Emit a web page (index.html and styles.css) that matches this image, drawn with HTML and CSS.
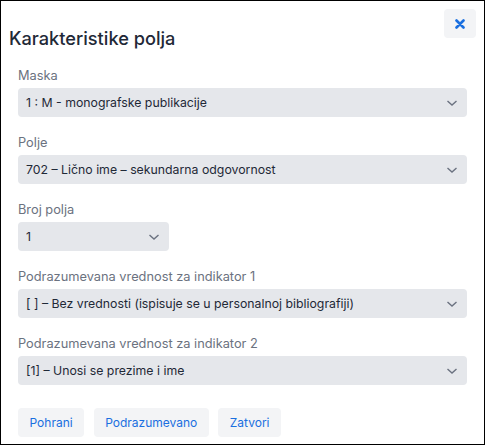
FILE: index.html
```html
<!DOCTYPE html>
<html lang="sr">
<head>
<meta charset="utf-8">
<title>Karakteristike polja</title>
<link rel="stylesheet" href="styles.css">
</head>
<body>
<div class="dialog">
  <div class="header">
    <h1 class="title">Karakteristike polja</h1>
    <button class="close" type="button" aria-label="Zatvori">
      <svg width="10" height="10" viewBox="0 0 10 10"><path d="M1.5 1.5 L8.5 8.5 M8.5 1.5 L1.5 8.5" stroke="#1a6fe0" stroke-width="2.6" stroke-linecap="round" fill="none"/></svg>
    </button>
  </div>
  <div class="form">
    <div class="field">
      <div class="label">Maska</div>
      <div class="select">
        <span class="value">1 : M - monografske publikacije</span>
        <svg class="chev" width="12" height="8" viewBox="0 0 12 8"><path d="M1.5 2 L6 6 L10.5 2" stroke="#6b7280" stroke-width="1.4" fill="none"/></svg>
      </div>
    </div>
    <div class="field">
      <div class="label">Polje</div>
      <div class="select">
        <span class="value">702 – Lično ime – sekundarna odgovornost</span>
        <svg class="chev" width="12" height="8" viewBox="0 0 12 8"><path d="M1.5 2 L6 6 L10.5 2" stroke="#6b7280" stroke-width="1.4" fill="none"/></svg>
      </div>
    </div>
    <div class="field">
      <div class="label">Broj polja</div>
      <div class="select small">
        <span class="value">1</span>
        <svg class="chev" width="12" height="8" viewBox="0 0 12 8"><path d="M1.5 2 L6 6 L10.5 2" stroke="#6b7280" stroke-width="1.4" fill="none"/></svg>
      </div>
    </div>
    <div class="field">
      <div class="label">Podrazumevana vrednost za indikator 1</div>
      <div class="select">
        <span class="value">[ ] – Bez vrednosti (ispisuje se u personalnoj bibliografiji)</span>
        <svg class="chev" width="12" height="8" viewBox="0 0 12 8"><path d="M1.5 2 L6 6 L10.5 2" stroke="#6b7280" stroke-width="1.4" fill="none"/></svg>
      </div>
    </div>
    <div class="field">
      <div class="label">Podrazumevana vrednost za indikator 2</div>
      <div class="select">
        <span class="value">[1] – Unosi se prezime i ime</span>
        <svg class="chev" width="12" height="8" viewBox="0 0 12 8"><path d="M1.5 2 L6 6 L10.5 2" stroke="#6b7280" stroke-width="1.4" fill="none"/></svg>
      </div>
    </div>
    <div class="actions">
      <button class="btn" type="button">Pohrani</button>
      <button class="btn" type="button">Podrazumevano</button>
      <button class="btn" type="button">Zatvori</button>
    </div>
  </div>
</div>
</body>
</html>
```
FILE: styles.css
```css
* { box-sizing: border-box; }
html, body { margin: 0; padding: 0; background: #fff; }
body {
  font-family: "Inter", "Noto Sans", "Liberation Sans", sans-serif;
  color: #1f2937;
}
.dialog {
  width: 485px;
  height: 445px;
  border: 1px solid #000;
  background: #fff;
}
.header {
  display: flex;
  justify-content: space-between;
  align-items: flex-start;
  padding: 8px 8px 0 8px;
}
.title {
  margin: 17px 0 0 0;
  font-size: 18.2px;
  line-height: 24px;
  font-weight: 500;
  color: #1f2937;
}
.close {
  width: 32px;
  height: 29px;
  border: none;
  border-radius: 4px;
  background: #f3f4f6;
  display: flex;
  align-items: center;
  justify-content: center;
  padding: 0;
}
.form {
  padding: 0 17px 0 17px;
  margin-top: 17px;
}
.field {
  margin-bottom: 17px;
}
.label {
  font-size: 12.8px;
  line-height: 18px;
  color: #6b7280;
  margin-bottom: 3px;
}
.select {
  height: 29px;
  background: #e5e7eb;
  border-radius: 4px;
  display: flex;
  align-items: center;
  justify-content: space-between;
  padding: 0 9px 0 8px;
}
.select.small { width: 151px; }
.value {
  font-size: 12.3px;
  color: #1f2937;
  white-space: nowrap;
}
.chev { flex: none; }
.actions {
  display: flex;
  gap: 9.5px;
  margin-top: 23px;
}
.btn {
  height: 29px;
  border: none;
  border-radius: 4px;
  background: #f3f4f6;
  color: #1a6fe0;
  font-family: inherit;
  font-size: 12px;
  padding: 0 11.5px;
}
```
